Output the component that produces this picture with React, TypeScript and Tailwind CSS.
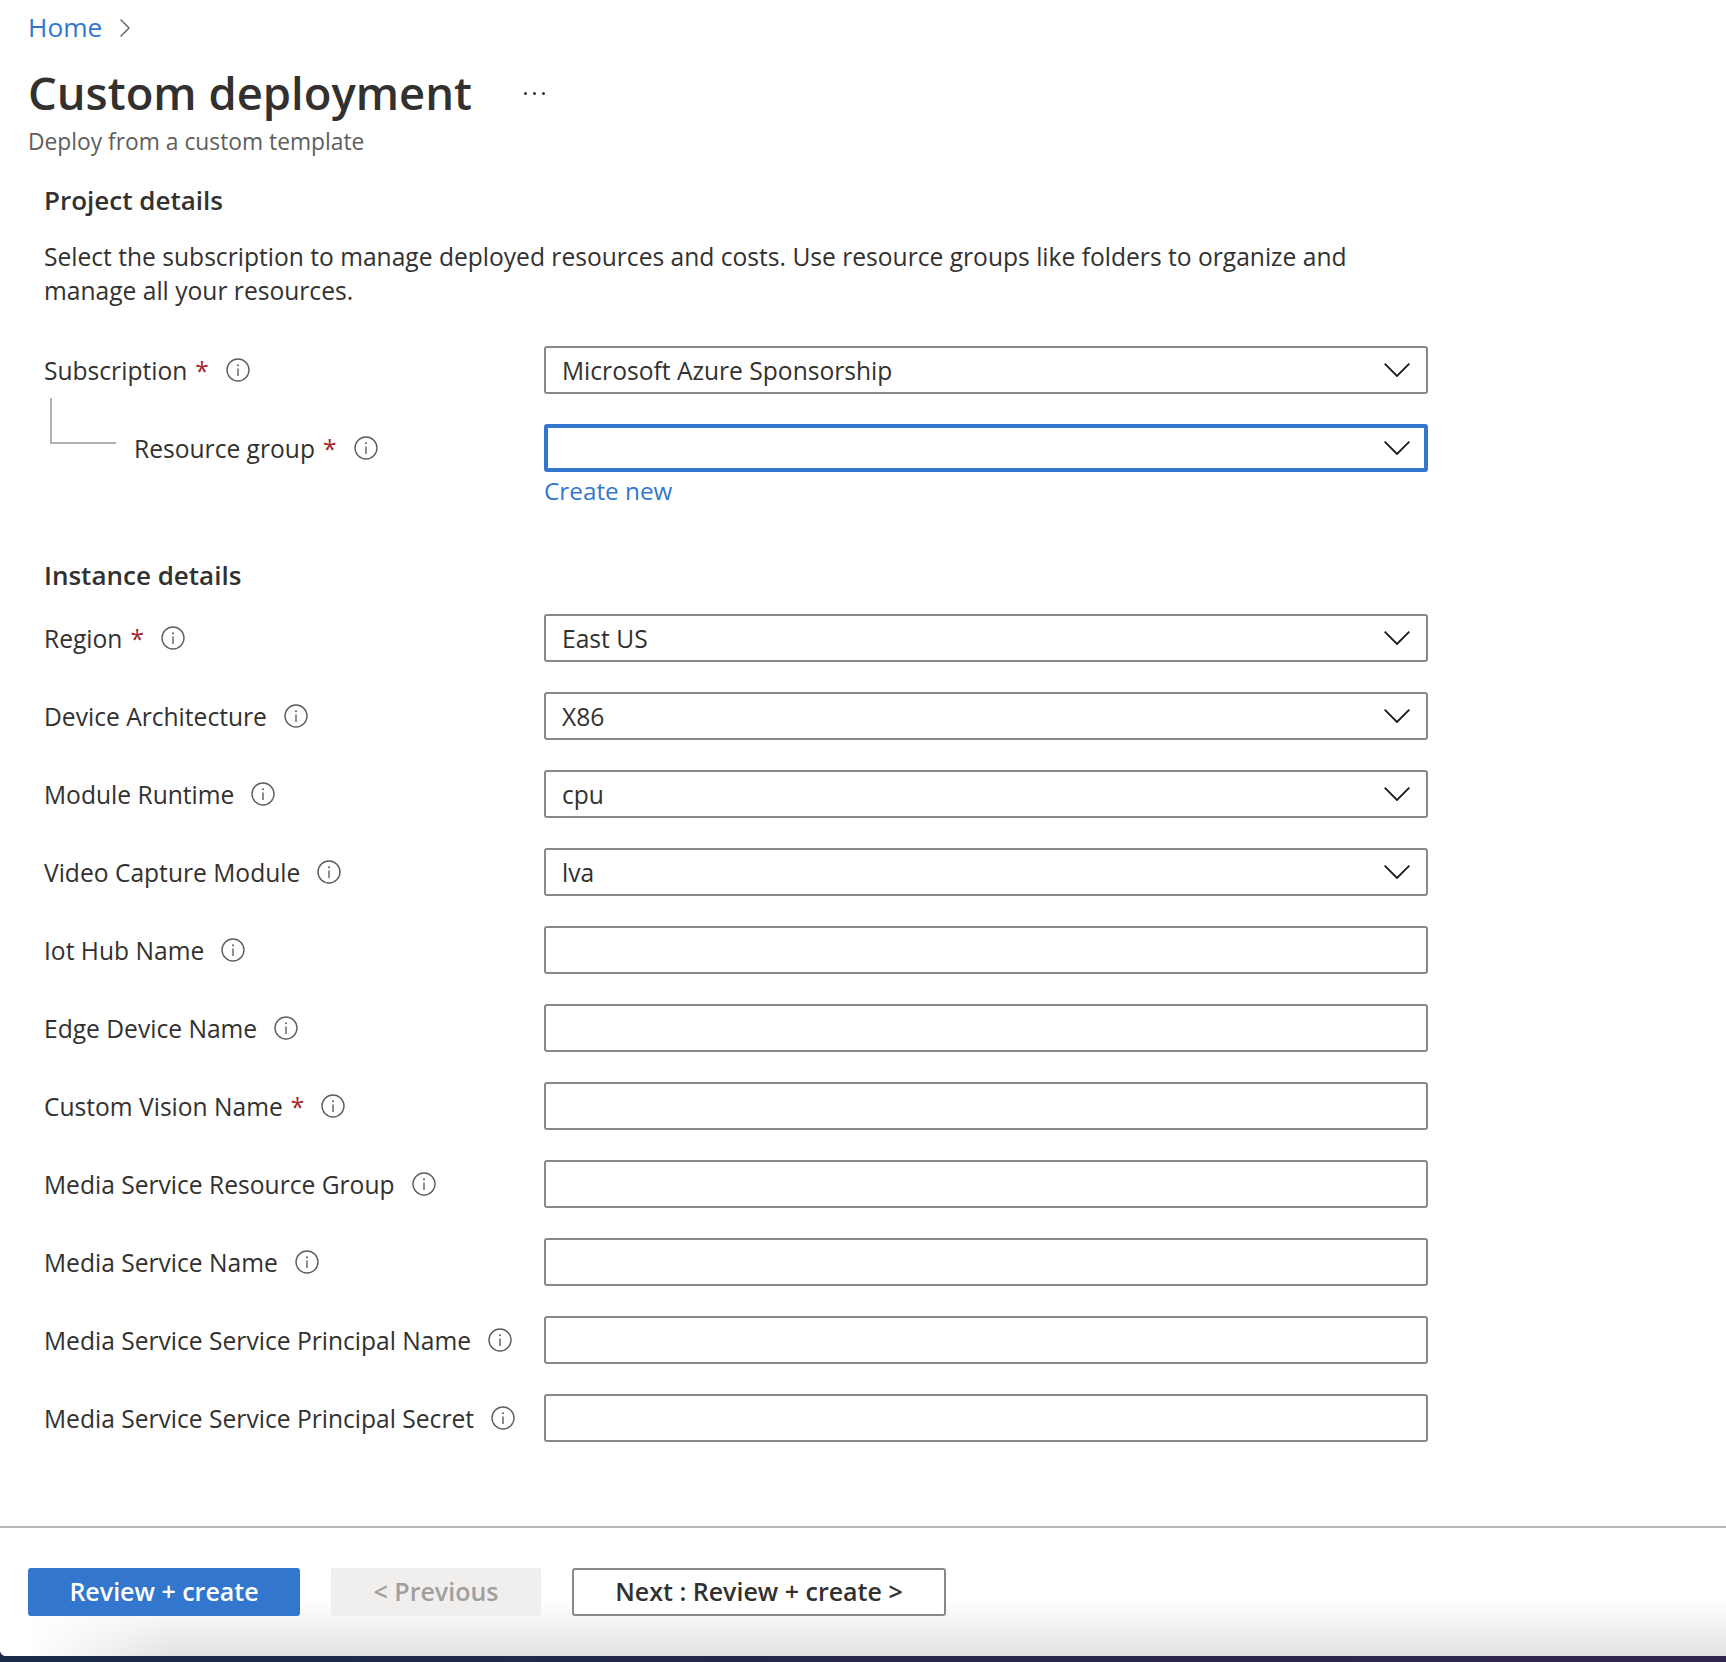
import { ChevronRight } from 'lucide-react';

interface Field {
  label: string;
  required?: boolean;
  value?: string;
  select?: boolean;
}

const fields: Field[] = [
  { label: 'Region', required: true, value: 'East US', select: true },
  { label: 'Device Architecture', value: 'X86', select: true },
  { label: 'Module Runtime', value: 'cpu', select: true },
  { label: 'Video Capture Module', value: 'lva', select: true },
  { label: 'Iot Hub Name' },
  { label: 'Edge Device Name' },
  { label: 'Custom Vision Name', required: true },
  { label: 'Media Service Resource Group' },
  { label: 'Media Service Name' },
  { label: 'Media Service Service Principal Name' },
  { label: 'Media Service Service Principal Secret' },
];

function InfoIcon() {
  return (
    <svg viewBox="0 0 24 24" className="-mt-[2px] ml-[17px] h-6 w-6 shrink-0 text-[#605e5c]" fill="none" stroke="currentColor">
      <circle cx="12" cy="12" r="11" strokeWidth="1.4" />
      <path d="M12 10.5V18" strokeWidth="1.4" />
      <circle cx="12" cy="7.2" r="1" fill="currentColor" stroke="none" />
    </svg>
  );
}

function Chevron({ focused }: { focused?: boolean }) {
  return (
    <svg
      viewBox="0 0 26 14"
      className={
        focused
          ? 'absolute right-[14px] top-[13px] h-[14px] w-[26px] text-[#201f1e]'
          : 'absolute right-[16px] top-[15px] h-[14px] w-[26px] text-[#201f1e]'
      }
      fill="none"
      stroke="currentColor"
    >
      <path d="M0.7 0.7L13 13L25.3 0.7" strokeWidth="1.9" />
    </svg>
  );
}

function Label({ field }: { field: Field }) {
  return (
    <div className="mt-[3px] flex items-center">
      <span>{field.label}</span>
      {field.required && <span className="ml-2 text-[#a4262c]">*</span>}
      <InfoIcon />
    </div>
  );
}

function Control({ value, select, focused }: { value?: string; select?: boolean; focused?: boolean }) {
  return (
    <div
      className={
        focused
          ? 'relative h-12 w-[884px] rounded-[3px] border-4 border-[#3277cd] bg-white px-[14px] leading-[42px]'
          : 'relative h-12 w-[884px] rounded-[3px] border-2 border-[#8a8886] bg-white px-4 leading-[46px]'
      }
    >
      {value}
      {select && <Chevron focused={focused} />}
    </div>
  );
}

export default function App() {
  return (
    <div className="flex h-[1662px] w-[1726px] flex-col overflow-hidden bg-white font-['Open_Sans','Noto_Sans',sans-serif] text-[24.6px] text-[#323130]">
      <div className="flex h-[54px] items-center pl-7 pt-[2px] text-[#3277cd]">
        <span className="text-[26.3px]">Home</span>
        <ChevronRight className="ml-[7px] h-8 w-8 text-[#605e5c]" strokeWidth={1} />
      </div>

      <div className="flex h-[78px] items-center pb-[2px] pl-7">
        <h1 className="text-[45.4px] font-semibold text-[#323130]">Custom deployment</h1>
        <div className="ml-[52px] mt-[2px] flex gap-[6px]">
          <span className="h-[3px] w-[3px] rounded-full bg-[#323130]" />
          <span className="h-[3px] w-[3px] rounded-full bg-[#323130]" />
          <span className="h-[3px] w-[3px] rounded-full bg-[#323130]" />
        </div>
      </div>

      <div className="-mt-[6px] pl-7 text-[22.8px] leading-[32px] text-[#605e5c]">Deploy from a custom template</div>

      <div className="pl-11 pt-[24px]">
        <h2 className="text-[26px] font-semibold leading-[36px]">Project details</h2>
        <p className="mt-[22px] w-[1360px] leading-[34px]">
          Select the subscription to manage deployed resources and costs. Use resource groups like folders to organize and manage all your resources.
        </p>

        <div className="mt-[38px] flex h-12 items-center justify-between pr-[298px]">
          <Label field={{ label: 'Subscription', required: true }} />
          <Control value="Microsoft Azure Sponsorship" select />
        </div>

        <div className="mt-[30px] flex h-12 items-center justify-between pr-[298px]">
          <div className="relative flex items-center pl-[90px]">
            <div className="absolute -top-[30px] left-[6px] h-[46px] w-[66px] border-b-2 border-l-2 border-[#b3b0ad]" />
            <Label field={{ label: 'Resource group', required: true }} />
          </div>
          <Control select focused />
        </div>

        <div className="ml-[500px] mt-[2px] text-[24.3px] leading-[34px] text-[#3277cd]">Create new</div>

        <h2 className="mt-[49px] text-[26px] font-semibold leading-[36px]">Instance details</h2>

        <div className="mt-[21px] flex flex-col gap-[30px] pr-[298px]">
          {fields.map((f) => (
            <div key={f.label} className="flex h-12 items-center justify-between">
              <Label field={f} />
              <Control value={f.value} select={f.select} />
            </div>
          ))}
        </div>
      </div>

      <div className="mt-[84px] flex flex-1 flex-col border-t-2 border-[#b8b8b8] bg-gradient-to-r from-[#1a2b4a] via-[#25264a] to-[#33264d]">
        <div className="relative flex-1 rounded-bl-[6px] bg-gradient-to-b from-white from-[55%] to-[#e3e3e3]">
          <div className="absolute inset-y-0 left-0 w-[170px] rounded-bl-[6px] bg-gradient-to-r from-white from-[15%] to-transparent" />
          <div className="relative flex items-start pl-7 pt-10 text-[25px]">
            <button className="h-12 w-[272px] rounded-[3px] bg-[#3277cd] font-semibold text-white">Review + create</button>
            <button className="ml-[31px] h-12 w-[210px] rounded-[3px] bg-[#f0efee] font-semibold text-[#a19f9d]">&lt; Previous</button>
            <button className="ml-[31px] h-12 w-[374px] rounded-[3px] border-2 border-[#8a8886] bg-white font-semibold text-[#323130]">Next : Review + create &gt;</button>
          </div>
        </div>
        <div className="h-[6px]" />
      </div>
    </div>
  );
}
